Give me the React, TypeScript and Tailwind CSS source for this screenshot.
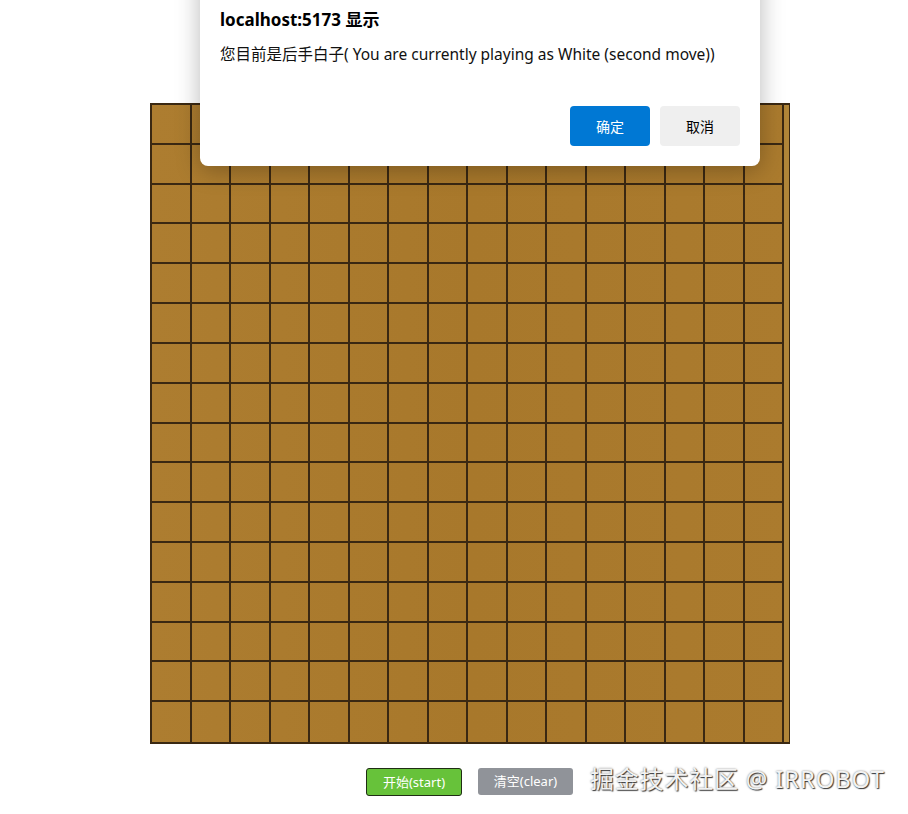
import { JSX } from "react";

const ROWS = 16;
const COLS = 16;

const Board = (): JSX.Element => {
  const cells = Array.from({ length: ROWS * COLS }, (_, i) => i);
  return (
    <div className="flex w-[640px] h-[641px] border-2 border-r border-[#3a2812] bg-[linear-gradient(90deg,#ad7d30_0%,#a8782b_50%,#ab7b2e_100%)]">
      <div className="grid grid-cols-[repeat(16,39.5px)] grid-rows-[repeat(16,1fr)] h-full">
        {cells.map((i) => (
          <div
            key={i}
            className={`border-[#3a2812] border-r-2 ${
              i >= (ROWS - 1) * COLS ? "" : "border-b-2"
            }`}
          />
        ))}
      </div>
      <div className="flex-1 bg-[#b08538]" />
    </div>
  );
};

const AlertDialog = (): JSX.Element => (
  <div className="absolute left-[200px] top-[-40px] w-[560px] h-[206px] bg-white rounded-lg shadow-[0_4px_24px_rgba(0,0,0,0.28)] flex flex-col justify-end px-5 pb-5">
    <div className="text-[17px] font-bold text-black leading-5 mb-[14px]">
      localhost:5173 显示
    </div>
    <div className="text-[15.5px] text-[#111] leading-5">
      您目前是后手白子( You are currently playing as White (second move))
    </div>
    <div className="flex justify-end gap-[10px] mt-[42px]">
      <button className="w-20 h-10 rounded bg-[#0078d4] text-white text-[14px]">
        确定
      </button>
      <button className="w-20 h-10 rounded bg-[#efefef] text-black text-[14px]">
        取消
      </button>
    </div>
  </div>
);

export default function App(): JSX.Element {
  return (
    <div
      className="relative w-[908px] h-[814px] bg-white overflow-hidden"
      style={{ fontFamily: '"Noto Sans", "Noto Sans CJK SC", sans-serif' }}
    >
      <div className="pt-[103px] pl-[150px] flex flex-col">
        <Board />
        <div className="flex gap-4 mt-6 pl-[216px]">
          <button className="w-[96px] h-[28px] rounded-[3px] border border-[#1f2d14] bg-[#67c23a] text-white text-[13px] leading-none">
            开始(start)
          </button>
          <button className="w-[95px] h-[27px] rounded-[3px] bg-[#909399] text-white text-[13px] leading-none">
            清空(clear)
          </button>
        </div>
      </div>
      <AlertDialog />
      <div className="absolute left-[590px] top-[761px] text-[24px] tracking-[0.8px] text-[#f2f2f2] [text-shadow:1px_1px_1px_rgba(0,0,0,0.75),0_0_2px_rgba(0,0,0,0.5)]">
        掘金技术社区 @ IRROBOT
      </div>
    </div>
  );
}
